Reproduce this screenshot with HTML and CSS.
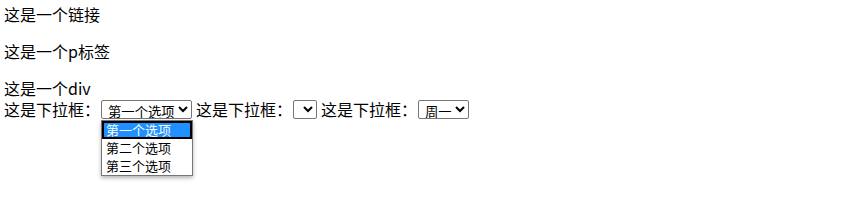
FILE: index.html
```html
<!DOCTYPE html>
<html>
<head>
<meta charset="utf-8">
<link rel="stylesheet" href="styles.css">
</head>
<body>
<div class="line"><a class="link">这是一个链接</a></div>
<p class="para">这是一个p标签</p>
<div class="line">这是一个div</div>
<div class="line row">
  <span class="lbl">这是下拉框：</span><select class="sel sel1"><option>第一个选项</option><option>第二个选项</option><option>第三个选项</option></select>
  <span class="lbl gap">这是下拉框：</span><select class="sel sel2"></select>
  <span class="lbl gap">这是下拉框：</span><select class="sel sel3"><option>周一</option></select>
  <ul class="popup">
    <li class="opt active">第一个选项</li>
    <li class="opt">第二个选项</li>
    <li class="opt">第三个选项</li>
  </ul>
</div>
</body>
</html>
```
FILE: styles.css
```css
html { height: 100%; }
body {
  margin: 4px;
  min-height: 190px;
  font-family: "Microsoft YaHei", "Noto Sans CJK SC", sans-serif;
  font-size: 16px;
  line-height: 21px;
  color: #000;
  background: #fff;
}
.line { height: 21px; }
.link { color: #000; }
.para { margin: 16px 0; height: 21px; }
.row { display: flex; align-items: center; position: relative; }
.gap { margin-left: 4px; }
.sel {
  font-family: "Noto Sans CJK SC", sans-serif;
  font-size: 13.33px;
  height: 19px;
  padding: 0 0 0 2px;
  border: 1px solid #767676;
  border-radius: 2px;
  background: #fff;
  color: #000;
  margin: 0 0 0 1px;
  box-sizing: border-box;
}
.sel1 { width: 91px; }
.sel2 { width: 24px; }
.sel3 { width: 51px; }
.popup {
  position: absolute;
  left: 97px;
  top: 21px;
  width: 92px;
  margin: 0;
  padding: 0;
  list-style: none;
  box-sizing: border-box;
  border: 1px solid #767676;
  background: #fff;
  box-shadow: 0 2px 4px rgba(0,0,0,0.3);
  font-family: "Noto Sans CJK SC", sans-serif;
  font-size: 13px;
  line-height: 18px;
  z-index: 2;
}
.opt { height: 18px; padding-left: 4px; white-space: nowrap; }
.opt.active {
  background: #1e90ff;
  color: #fff;
  outline: 2px solid #000;
  outline-offset: -2px;
}
```
